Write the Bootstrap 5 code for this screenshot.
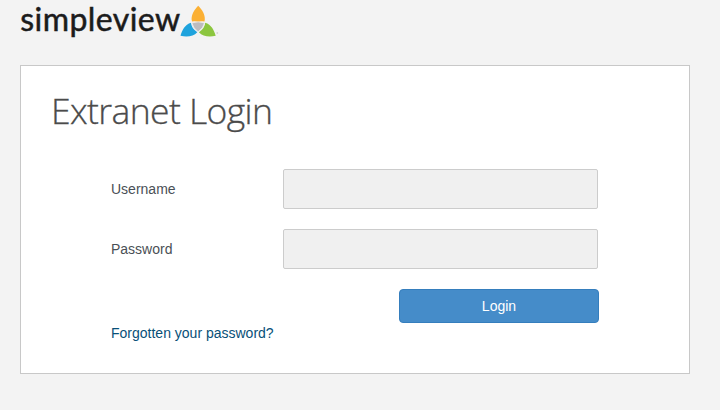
<!DOCTYPE html>
<html lang="en">
<head>
<meta charset="utf-8">
<meta name="viewport" content="width=device-width, initial-scale=1">
<title>Extranet Login</title>
<link href="https://cdn.jsdelivr.net/npm/bootstrap@5.3.0/dist/css/bootstrap.min.css" rel="stylesheet">
<style>
body{background:#f3f3f3;color:#4a5056;font:14px/20px "Liberation Sans",Arial,sans-serif;padding:0 30px 0 20px;overflow:hidden}
.site-header{height:65px}
.brand-logo{display:block;width:202px;height:46px}
.brand-name{font:400 32px Lato,sans-serif;fill:#1b1b1b;stroke:#1b1b1b;stroke-width:.5px}
.login-panel{height:309px;border:1px solid #c8c8c8;border-radius:0;padding:0 30px}
.login-title{font:300 35.5px/50px "Open Sans",sans-serif;color:#4b4b4b;-webkit-text-stroke:.3px #4b4b4b;margin:19px 0 34px;letter-spacing:-.6px;white-space:nowrap}
.login-form{width:488px;margin-left:60px}
.field-row{height:40px;margin-bottom:20px}
.field-label{width:172px}
.field-input,.field-input:focus{width:315px;height:40px;background:#f0f0f0;border:1px solid #ccc;border-radius:2px}
.login-btn{width:200px;height:34px;font-size:14px;line-height:20px;padding:6px;border-radius:4px;--bs-btn-bg:#458cc9;--bs-btn-border-color:#357ebd;--bs-btn-hover-bg:#3577b0}
.forgot-link{color:#085078}
</style>
</head>
<body>
<header class="site-header">
<svg class="brand-logo" viewBox="20 0 202 46" role="img" aria-label="simpleview">
<text class="brand-name" x="20.2" y="30.700" textLength="160" lengthAdjust="spacing">simpleview</text>
<path fill="#fbb034" d="M198.2 5.7C194.5 9.5 190.3 15.5 192 21.6Q195 20.6 198.2 22.2Q201.500 20.6 204.500 21.600C206.200 15.5 202 9.5 198.200 5.700Z"/>
<path fill="#1fa3dd" d="M180.500 35.700C182 30.500 185 24.200 191 22.700Q191.200 28 197.300 32.200C193.500 36.400 187 37.300 180.500 35.700Z"/>
<path fill="#8cc63f" d="M215.700 35.700C214.200 30.500 211.200 24.200 205.200 22.700Q205 28 198.900 32.200C202.700 36.400 209.200 37.300 215.700 35.700Z"/>
<path fill="#bdbcbe" stroke="#f3f3f3" stroke-width=".8" d="M191.800 22.900Q198.100 20.700 204.500 22.900Q203.600 28 198.100 31.800Q192.800 28 191.800 22.900Z"/>
<circle cx="217.300" cy="33" r=".9" fill="#d5d5d5"/>
</svg>
</header>
<main class="login-panel bg-white">
<h1 class="login-title">Extranet Login</h1>
<form class="login-form">
<div class="field-row d-flex align-items-center">
<label class="field-label" for="username">Username</label>
<input class="form-control field-input" id="username" type="text">
</div>
<div class="field-row d-flex align-items-center">
<label class="field-label" for="password">Password</label>
<input class="form-control field-input" id="password" type="password">
</div>
<div class="d-flex justify-content-end"><button class="btn btn-primary login-btn" type="button">Login</button></div>
<a class="forgot-link text-decoration-none d-inline-block" href="#">Forgotten your password?</a>
</form>
</main>
<script src="https://cdn.jsdelivr.net/npm/bootstrap@5.3.0/dist/js/bootstrap.bundle.min.js"></script>
</body>
</html>
